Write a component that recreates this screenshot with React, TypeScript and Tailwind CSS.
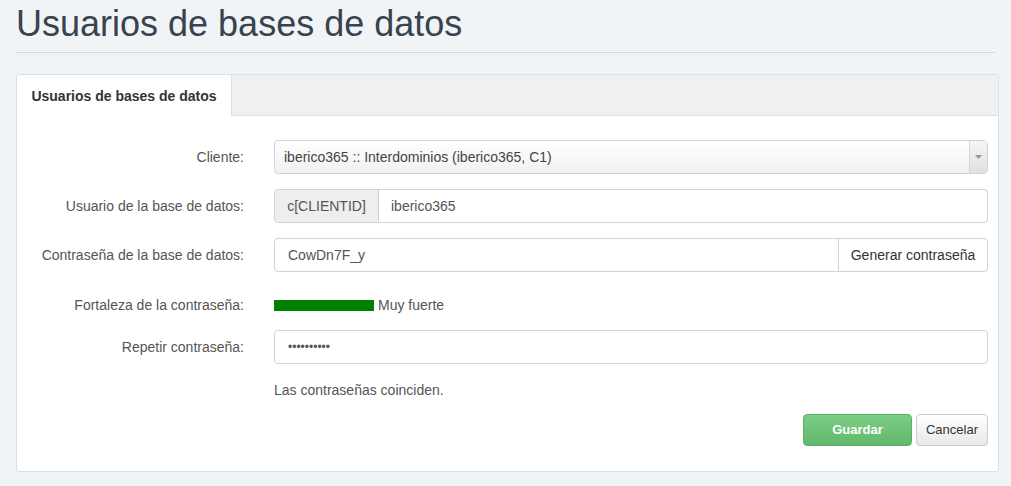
export default function App() {
  return (
    <div className="min-h-screen bg-[#f1f4f7] px-4 font-['Liberation_Sans',Arial,sans-serif] text-[14px] text-[#333]">
      <h1 className="pt-[4px] pb-[8px] text-[36px] leading-[40px] text-[#38434d]">Usuarios de bases de datos</h1>
      <div className="mb-[21px] border-b border-[#d3d8dc]" />

      <div className="w-[983px] rounded-[3px] border border-[#dcdfe3] bg-white">
        <div className="flex h-[41px] rounded-t-[3px] border-b border-[#dcdfe3] bg-[#eff0f2]">
          <div className="-mb-px flex w-[215px] items-center justify-center rounded-tl-[3px] border-r border-[#dcdfe3] bg-white pt-[2px] text-[14px] font-bold text-[#333]">
            Usuarios de bases de datos
          </div>
        </div>

        <div className="flex flex-col pt-[24px] pr-[10px] pb-[25px]">
          <Row label="Cliente:">
            <div className="flex h-[34px] items-center rounded-[4px] border border-[#cfd3d6] bg-gradient-to-b from-white to-[#f1f1f1] pl-[9px] text-[#444]">
              <span className="flex-1">iberico365 :: Interdominios (iberico365, C1)</span>
              <div className="flex h-full w-[18px] items-center justify-center border-l border-[#d6d6d6] bg-gradient-to-b from-[#f5f5f5] to-[#e0e0e0]">
                <svg width="7" height="4" viewBox="0 0 7 4"><path d="M0 0h7L3.5 4z" fill="#999" /></svg>
              </div>
            </div>
          </Row>

          <Row label="Usuario de la base de datos:" className="mt-[15px]">
            <div className="flex h-[34px] rounded-[4px] border border-[#cfd3d6]">
              <div className="flex w-[104px] items-center justify-center rounded-l-[3px] border-r border-[#cfd3d6] bg-[#eeeeee] text-[#555]">
                c[CLIENTID]
              </div>
              <div className="flex flex-1 items-center pl-[12px] text-[#555]">iberico365</div>
            </div>
          </Row>

          <Row label="Contraseña de la base de datos:" className="mt-[15px]">
            <div className="flex h-[34px] rounded-[4px] border border-[#cfd3d6]">
              <div className="flex flex-1 items-center pl-[13px] text-[#555]">CowDn7F_y</div>
              <div className="flex w-[149px] items-center justify-center border-l border-[#cfd3d6] text-[#333]">
                Generar contraseña
              </div>
            </div>
          </Row>

          <Row label="Fortaleza de la contraseña:" className="mt-[20px]">
            <div className="flex h-[26px] items-center">
              <div className="h-[11px] w-[100px] bg-[#008000]" />
              <span className="ml-[4px] text-[#555]">Muy fuerte</span>
            </div>
          </Row>

          <Row label="Repetir contraseña:" className="mt-[12px]">
            <div className="flex h-[34px] items-center rounded-[4px] border border-[#cfd3d6] pl-[13px] text-[12px] text-[#555]">
              ••••••••••
            </div>
          </Row>

          <div className="mt-[16px] ml-[257px] text-[#555]">Las contraseñas coinciden.</div>

          <div className="mt-[13px] flex justify-end gap-[4px]">
            <button className="h-[32px] w-[109px] rounded-[4px] border border-[#5cb062] bg-gradient-to-b from-[#7ccd84] to-[#62b86a] text-[13px] font-bold text-white">
              Guardar
            </button>
            <button className="h-[32px] w-[72px] rounded-[4px] border border-[#ccc] bg-gradient-to-b from-white to-[#e8e8e8] text-[13px] text-[#333]">
              Cancelar
            </button>
          </div>
        </div>
      </div>
    </div>
  );
}

function Row({
  label,
  children,
  className = "",
}: {
  label: string;
  children: React.ReactNode;
  className?: string;
}) {
  return (
    <div className={`flex items-center ${className}`}>
      <label className="w-[227px] shrink-0 text-right text-[#555]">{label}</label>
      <div className="ml-[30px] flex-1">{children}</div>
    </div>
  );
}
